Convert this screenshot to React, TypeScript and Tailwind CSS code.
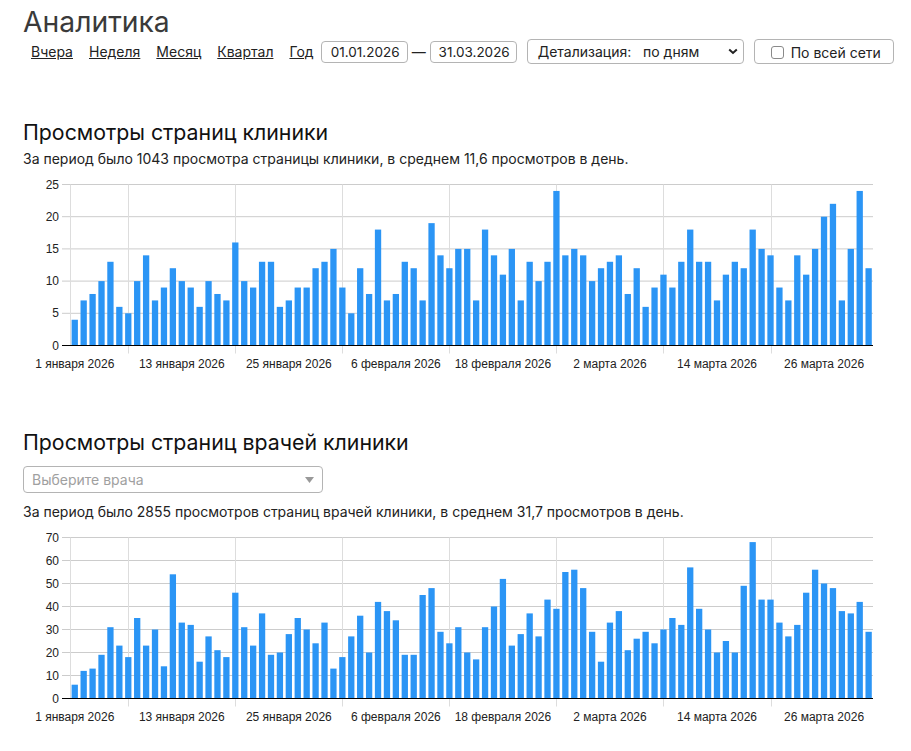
import React from "react";

const clinic = [4,7,8,10,13,6,5,10,14,7,9,12,10,9,6,10,8,7,16,10,9,13,13,6,7,9,9,12,13,15,9,5,12,8,18,7,8,13,12,7,19,14,12,15,15,7,18,14,11,15,7,13,10,13,24,14,15,14,10,12,13,14,8,12,6,9,11,9,13,18,13,13,7,11,13,12,18,15,14,9,7,14,11,15,20,22,7,15,24,12];
const doctors = [6,12,13,19,31,23,18,35,23,30,14,54,33,32,16,27,21,18,46,31,23,37,19,20,28,35,30,24,33,13,18,27,36,20,42,38,34,19,19,45,48,29,24,31,20,17,31,40,52,23,28,37,27,43,39,55,56,48,29,16,33,38,21,26,29,24,30,35,32,57,39,30,20,25,20,49,68,43,43,33,27,32,46,56,50,48,38,37,42,29];
const labels = ["1 января 2026","13 января 2026","25 января 2026","6 февраля 2026","18 февраля 2026","2 марта 2026","14 марта 2026","26 марта 2026"];

const W = 866, H = 200, L = 47.3, STEP = 8.92, TOP = 9.5, PH = 161;

function Chart({ data, max, step }: { data: number[]; max: number; step: number }) {
  const ticks: number[] = [];
  for (let v = 0; v <= max; v += step) ticks.push(v);
  const bottom = TOP + PH;
  const y = (v: number) => bottom - (v / max) * PH;
  const verticals = [0, 6.5, 18.5, 30.5, 42.5, 54.5, 66.5, 78.5];
  return (
    <svg width={W} height={H} className="block" style={{ fontFamily: '"Liberation Sans", Arial, sans-serif' }}>
      {ticks.filter((v) => v > 0).map((v) => (
        <line key={v} x1={39} x2={850} y1={y(v)} y2={y(v)} stroke="#cccccc" strokeWidth={1} />
      ))}
      {verticals.map((i) => {
        const x = Math.round(L + i * STEP) + 0.5;
        return <line key={i} x1={x} x2={x} y1={TOP} y2={i === 0 ? bottom : bottom + 8} stroke="#dddddd" strokeWidth={1} />;
      })}
      {data.map((v, i) => (
        <rect key={i} x={L + 1.3 + i * STEP} y={y(v)} width={6.3} height={bottom - y(v)} fill="#2b95f5" />
      ))}
      <line x1={39} x2={850} y1={bottom} y2={bottom} stroke="#000000" strokeWidth={1} />
      {ticks.map((v) => (
        <text key={v} x={36} y={y(v) + 4} textAnchor="end" fontSize={12} fill="#222222">{v}</text>
      ))}
      {labels.map((t, i) => (
        <text key={t} x={L + (0.5 + i * 12) * STEP} y={bottom + 22} textAnchor="middle" fontSize={12} fill="#222222">{t}</text>
      ))}
    </svg>
  );
}

export default function App() {
  const ctl = "border border-[#b4b4b4] rounded-[4px] bg-white text-[#222]";
  return (
    <div className="w-[911px] h-[751px] overflow-hidden bg-white pl-[23px] text-black" style={{ fontFamily: 'Inter, "Noto Sans", sans-serif' }}>
      <h1 className="text-[28.3px] leading-[34px] pt-[5px] text-[#3a3a3a] font-normal">Аналитика</h1>
      <div className="flex items-center h-[25px] pl-[8px] text-[14px] text-[#222]">
        <a className="underline mr-[16px]" href="#">Вчера</a>
        <a className="underline mr-[16px]" href="#">Неделя</a>
        <a className="underline mr-[16px]" href="#">Месяц</a>
        <a className="underline mr-[16px]" href="#">Квартал</a>
        <a className="underline mr-[7px]" href="#">Год</a>
        <input readOnly value="01.01.2026" className={`${ctl} w-[87px] h-[22px] text-center text-[13.5px] pl-[2px] outline-none`} />
        <span className="w-[22px] text-center">—</span>
        <input readOnly value="31.03.2026" className={`${ctl} w-[87px] h-[22px] text-center text-[13.5px] pl-[2px] outline-none`} />
        <div className={`${ctl} relative ml-[10px] w-[217px] h-[25px] flex items-center pl-[10px]`}>
          <span className="whitespace-pre">Детализация:{"  "} по дням</span>
          <svg className="absolute right-[5px] top-[8px]" width="10" height="7" viewBox="0 0 10 7">
            <path d="M1.2 1.5 L5 5 L8.8 1.5" fill="none" stroke="#222" strokeWidth="2" />
          </svg>
        </div>
        <div className={`${ctl} ml-[10px] w-[140px] h-[25px] flex items-center pl-[16px] pt-[2px]`}>
          <span className="w-[13px] h-[13px] border border-[#8a8a8a] rounded-[3px] mr-[7px]" />
          <span>По всей сети</span>
        </div>
      </div>
      <h2 className="text-[21.3px] leading-[26px] mt-[55px] font-normal text-[#111]">Просмотры страниц клиники</h2>
      <p className="text-[14px] leading-[16px] mt-[6px] text-[#222]">За период было 1043 просмотра страницы клиники, в среднем 11,6 просмотров в день.</p>
      <div className="mt-[8px]"><Chart data={clinic} max={25} step={5} /></div>
      <h2 className="text-[21.3px] leading-[26px] mt-[54px] font-normal text-[#111]">Просмотры страниц врачей клиники</h2>
      <div className="relative mt-[11px] w-[300px] h-[27px] border border-[#b4b4b4] rounded-[4px] flex items-center pl-[8px] text-[14px] text-[#a0a0a0]">
        Выберите врача
        <svg className="absolute right-[8px] top-[10px]" width="9" height="6" viewBox="0 0 9 6"><path d="M0 0 H9 L4.5 6 Z" fill="#999" /></svg>
      </div>
      <p className="text-[14px] leading-[16px] mt-[11px] text-[#222]">За период было 2855 просмотров страниц врачей клиники, в среднем 31,7 просмотров в день.</p>
      <div className="mt-[8px]"><Chart data={doctors} max={70} step={10} /></div>
    </div>
  );
}
